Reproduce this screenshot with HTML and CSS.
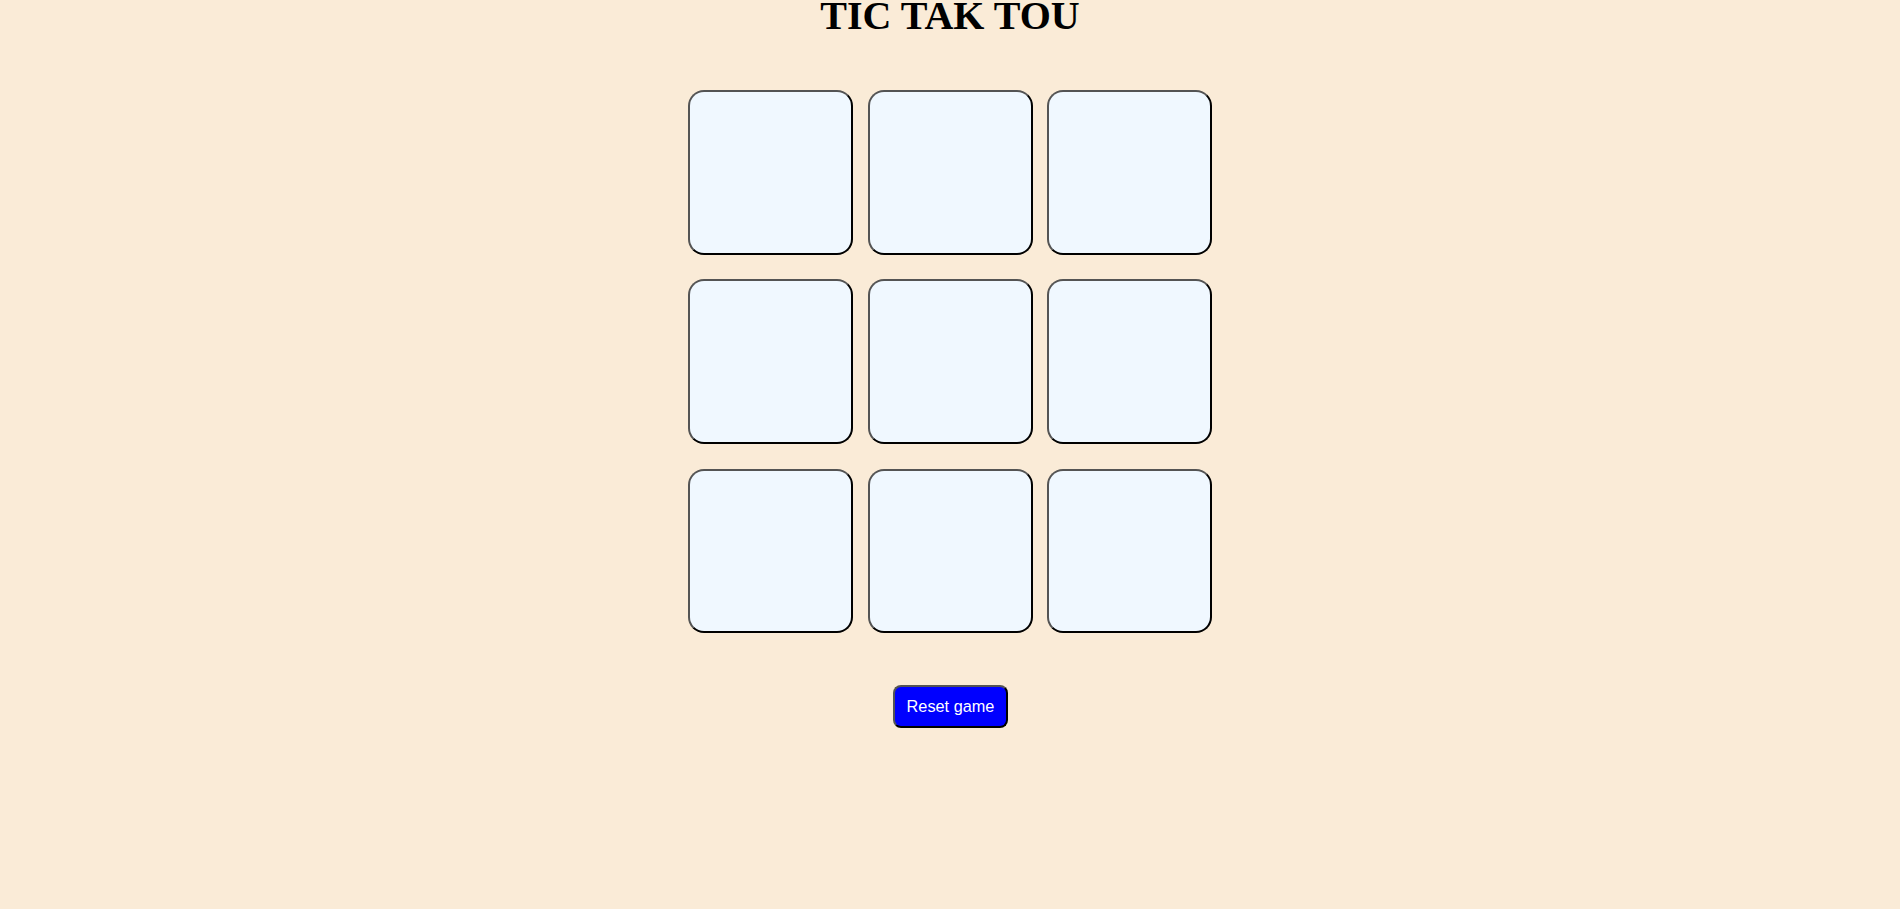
FILE: index.html
```html
<!DOCTYPE html>
<html lang="en">
<head>
<meta charset="UTF-8">
<title>Tic Tak Tou</title>
<link rel="stylesheet" href="styles.css">
</head>
<body>
  <h1 class="title">TIC TAK TOU</h1>
  <main class="container">
    <div class="game">
      <button class="box"></button>
      <button class="box"></button>
      <button class="box"></button>
      <button class="box"></button>
      <button class="box"></button>
      <button class="box"></button>
      <button class="box"></button>
      <button class="box"></button>
      <button class="box"></button>
    </div>
  </main>
  <div class="actions">
    <button class="reset-btn">Reset game</button>
  </div>
</body>
</html>
```
FILE: styles.css
```css
html, body {
  margin: 0;
  padding: 0;
}

body {
  background-color: #faebd7;
  min-height: 909px;
  font-family: "Liberation Serif", "Times New Roman", serif;
}

.title {
  margin: 0;
  font-size: 40px;
  line-height: 32px;
  font-weight: bold;
  text-align: center;
  color: #000;
}

.container {
  display: flex;
  justify-content: center;
  padding-top: 58px;
}

.game {
  display: grid;
  grid-template-columns: repeat(3, 165px);
  grid-auto-rows: 164.5px;
  column-gap: 14.75px;
  row-gap: 24.8px;
}

.box {
  box-sizing: border-box;
  width: 165px;
  height: 164.5px;
  margin: 0;
  padding: 0;
  background-color: #f0f8ff;
  border: 2px solid;
  border-color: #545454 #000 #000 #545454;
  border-radius: 16px;
}

.actions {
  display: flex;
  justify-content: center;
  padding-top: 51.5px;
}

.reset-btn {
  box-sizing: border-box;
  margin: 0 0 0 1px;
  padding: 10.3px 11.8px;
  font-family: "Liberation Sans", Arial, sans-serif;
  font-size: 16.3px;
  line-height: normal;
  color: #fff;
  background-color: #0000ff;
  border: 2px solid;
  border-color: #545454 #000 #000 #545454;
  border-radius: 8px;
}
```
